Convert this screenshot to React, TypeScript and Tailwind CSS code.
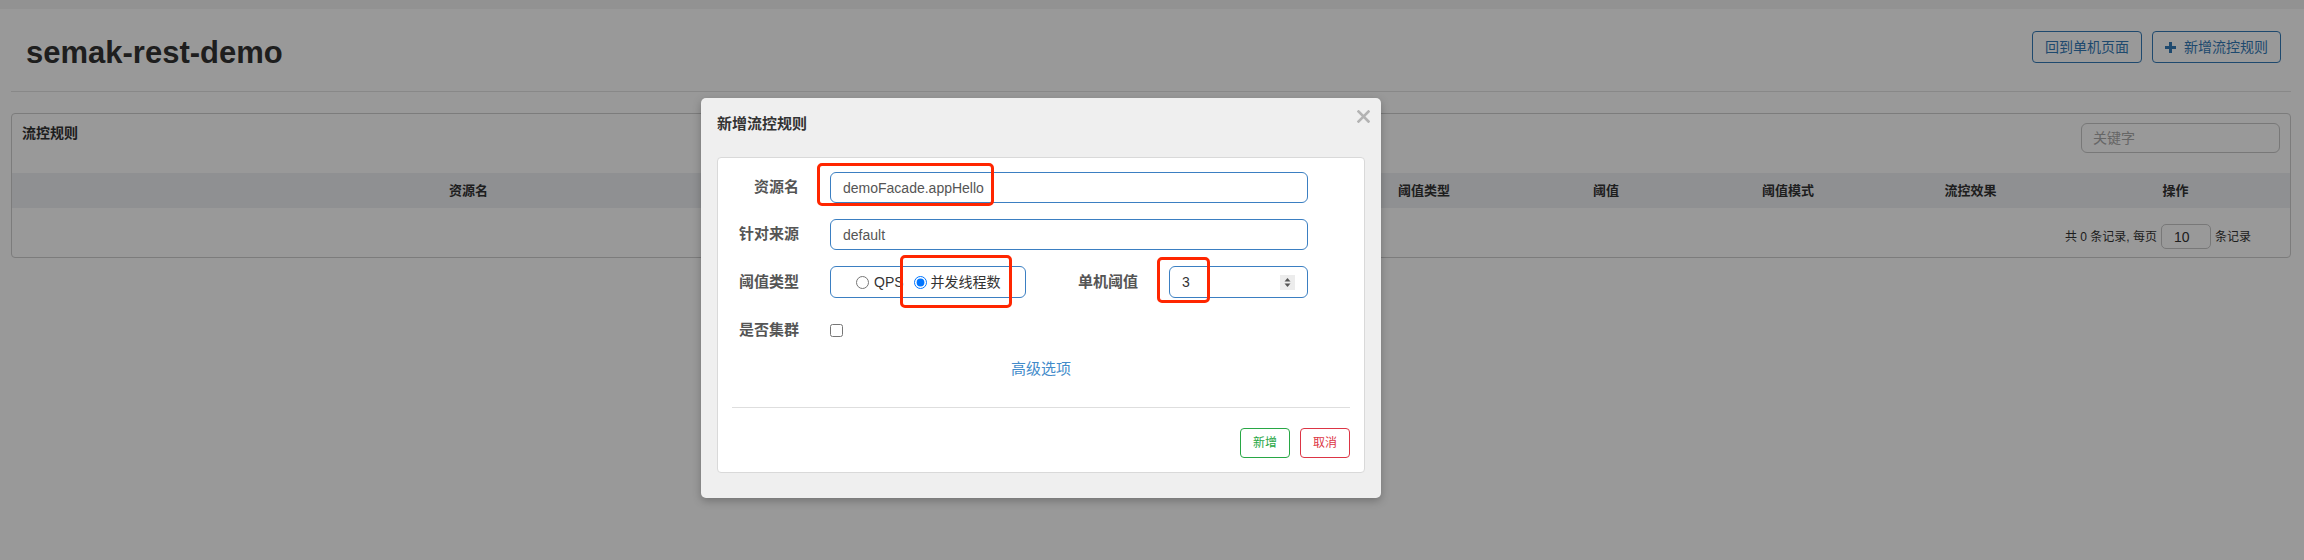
import React from 'react';

const FONT = "font-['Liberation_Sans','Noto_Sans_CJK_SC',sans-serif]";

// table columns: label + width (px)
const COLUMNS: [string, number][] = [
  ['资源名', 913],
  ['来源应用', 204],
  ['流控模式', 204],
  ['阈值类型', 182],
  ['阈值', 182],
  ['阈值模式', 182],
  ['流控效果', 183],
  ['操作', 227],
];

function PlusIcon() {
  return (
    <svg width="11" height="11" viewBox="0 0 11 11" className="shrink-0">
      <rect x="4" y="0" width="3" height="11" fill="currentColor" />
      <rect x="0" y="4" width="11" height="3" fill="currentColor" />
    </svg>
  );
}

function Spinner() {
  return (
    <svg width="15" height="15" viewBox="0 0 15 15" className="shrink-0">
      <rect width="15" height="15" fill="#ececec" />
      <polygon points="4.5,6.5 7.5,3 10.5,6.5" fill="#555" />
      <polygon points="4.5,8.5 7.5,12 10.5,8.5" fill="#555" />
    </svg>
  );
}

function CloseIcon() {
  return (
    <svg width="13" height="13" viewBox="0 0 13 13">
      <path d="M1.5 1.5 L11.5 11.5 M11.5 1.5 L1.5 11.5" stroke="#b3b3b3" strokeWidth="2.6" strokeLinecap="square" />
    </svg>
  );
}

function Label({ children, w = 'w-[81px]' }: { children: React.ReactNode; w?: string }) {
  return <div className={`${w} shrink-0 text-right text-[15px] font-bold text-[#555]`}>{children}</div>;
}

export default function App() {
  return (
    <div className={`relative h-[560px] w-full overflow-hidden bg-white ${FONT}`}>
      {/* top strip */}
      <div className="h-[9px] bg-[#f3f3f3]" />

      <div className="ml-[11px] mr-[13px]">
        {/* page header */}
        <div className="flex h-[83px] items-start justify-between border-b border-[#e3e3e3]">
          <h1 className="ml-[15px] mt-[28px] text-[31px] font-bold leading-[31px] text-[#333]">semak-rest-demo</h1>
          <div className="mr-[10px] mt-[22px] flex gap-[10px]">
            <button className="flex h-[32px] w-[110px] items-center justify-center rounded-[4px] border border-[#337ab7] text-[14px] text-[#337ab7]">
              回到单机页面
            </button>
            <button className="flex h-[32px] w-[129px] items-center justify-center gap-[8px] rounded-[4px] border border-[#337ab7] text-[14px] text-[#337ab7]">
              <PlusIcon />
              新增流控规则
            </button>
          </div>
        </div>

        {/* rules card */}
        <div className="mt-[21px] rounded-[4px] border border-[#cfcfcf] pb-[8px]">
          <div className="flex items-start justify-between px-[10px] pt-[9px]">
            <div className="text-[14px] font-bold leading-[20px] text-[#333]">流控规则</div>
            <input
              placeholder="关键字"
              className="h-[30px] w-[199px] rounded-[6px] border border-[#c8c8c8] px-[11px] text-[14px] text-[#555] placeholder:text-[#aaa] outline-none"
            />
          </div>
          <div className="mt-[20px] flex h-[35px] items-center bg-[#eef0f3]">
            {COLUMNS.map(([name, w]) => (
              <div key={name} style={{ width: w }} className="shrink-0 text-center text-[13px] font-bold text-[#333]">
                {name}
              </div>
            ))}
          </div>
          <div className="mt-[16px] flex items-center justify-end pr-[39px] text-[12px] text-[#333]">
            <span>共 0 条记录, 每页</span>
            <input
              defaultValue="10"
              className="mx-[4px] h-[25px] w-[50px] rounded-[5px] border border-[#c8c8c8] pl-[12px] text-[14px] text-[#333] outline-none"
            />
            <span>条记录</span>
          </div>
        </div>
      </div>

      {/* backdrop */}
      <div className="absolute inset-0 bg-black/40" />

      {/* modal */}
      <div className="absolute left-[701px] top-[98px] h-[400px] w-[680px] rounded-[5px] bg-[#efefef] px-[16px] pt-[15px] shadow-[0_3px_9px_rgba(0,0,0,0.25)]">
        <div className="text-[15px] font-bold leading-[22px] text-[#333]">新增流控规则</div>
        <button className="absolute right-[11px] top-[12px]">
          <CloseIcon />
        </button>

        <div className="mt-[22px] rounded-[4px] border border-[#d9d9d9] bg-white px-[14px] pb-[14px] pt-[14px]">
          <div className="-ml-[14px] flex h-[31px] items-center">
            <Label>资源名</Label>
            <input
              defaultValue="demoFacade.appHello"
              className="ml-[31px] h-[31px] w-[478px] rounded-[6px] border border-[#3b7fc2] px-[12px] text-[14px] text-[#555] outline-none"
            />
          </div>
          <div className="-ml-[14px] mt-[16px] flex h-[31px] items-center">
            <Label>针对来源</Label>
            <input
              defaultValue="default"
              className="ml-[31px] h-[31px] w-[478px] rounded-[6px] border border-[#3b7fc2] px-[12px] text-[14px] text-[#555] outline-none"
            />
          </div>
          <div className="-ml-[14px] mt-[16px] flex h-[32px] items-center">
            <Label>阈值类型</Label>
            <div className="ml-[31px] flex h-[32px] w-[196px] items-center rounded-[6px] border border-[#3b7fc2] pl-[25px] text-[14px] text-[#333]">
              <label className="flex items-center gap-[5px]">
                <input type="radio" name="grade" className="m-0 h-[13px] w-[13px]" />
                QPS
              </label>
              <label className="ml-[10px] flex items-center gap-[4px]">
                <input type="radio" name="grade" defaultChecked className="m-0 h-[13px] w-[13px]" />
                并发线程数
              </label>
            </div>
            <Label w="w-[112px]">单机阈值</Label>
            <div className="ml-[31px] flex h-[32px] w-[139px] items-center rounded-[6px] border border-[#3b7fc2] pl-[12px] pr-[12px]">
              <input defaultValue="3" className="w-full min-w-0 text-[14px] text-[#333] outline-none" />
              <Spinner />
            </div>
          </div>
          <div className="-ml-[14px] mt-[17px] flex h-[31px] items-center">
            <Label>是否集群</Label>
            <input type="checkbox" className="ml-[31px] m-0 h-[13px] w-[13px]" />
          </div>
          <div className="mt-[12px] text-center text-[15px] leading-[22px] text-[#428bca]">高级选项</div>
          <div className="mt-[27px] h-px bg-[#dedede]" />
          <div className="mt-[20px] flex justify-end gap-[10px]">
            <button className="h-[30px] w-[50px] rounded-[4px] border border-[#28a745] text-[12px] text-[#28a745]">新增</button>
            <button className="h-[30px] w-[50px] rounded-[4px] border border-[#dc3545] text-[12px] text-[#dc3545]">取消</button>
          </div>
        </div>
      </div>

      {/* screenshot annotations */}
      <div className="absolute left-[817px] top-[163px] h-[43px] w-[177px] rounded-[5px] border-[3px] border-[#ff2600]" />
      <div className="absolute left-[900px] top-[255px] h-[53px] w-[112px] rounded-[5px] border-[3px] border-[#ff2600]" />
      <div className="absolute left-[1157px] top-[257px] h-[46px] w-[53px] rounded-[5px] border-[3px] border-[#ff2600]" />
    </div>
  );
}
